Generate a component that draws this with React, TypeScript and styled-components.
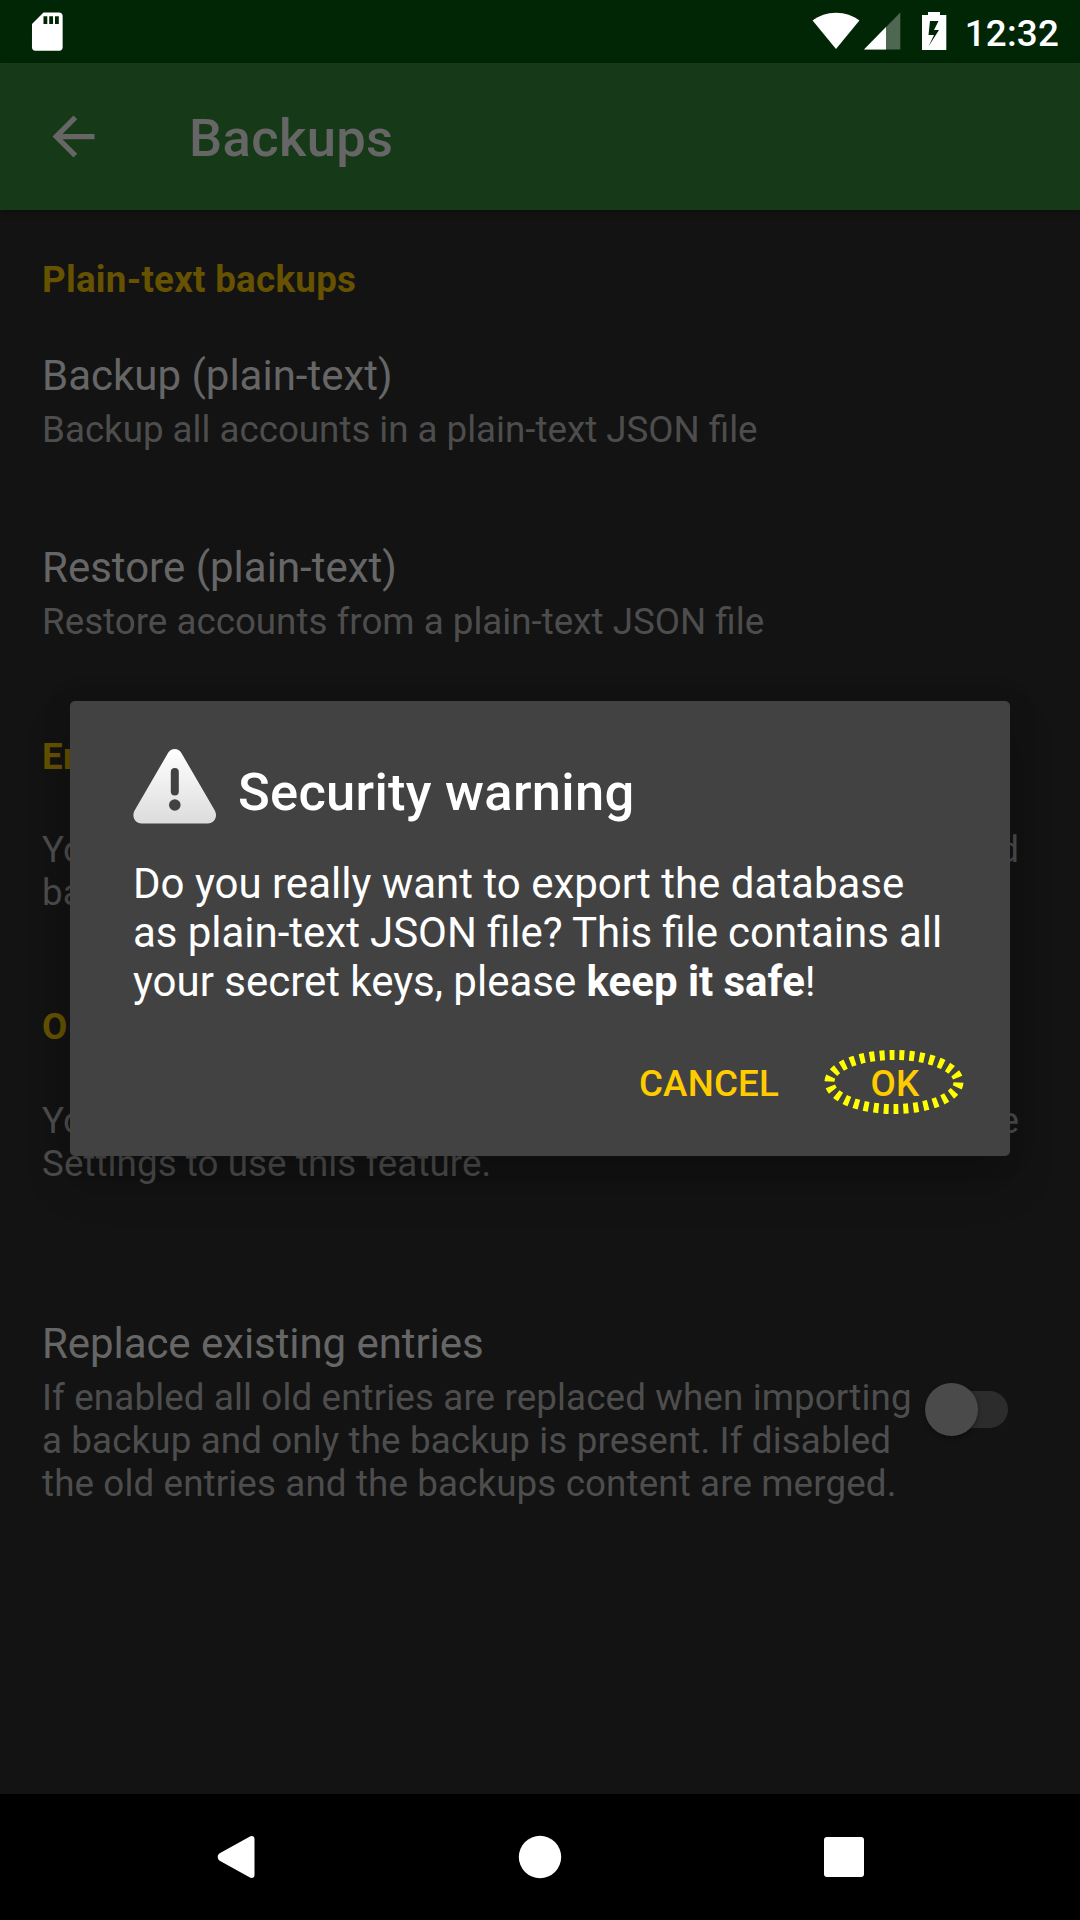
import React from "react";
import styled, { createGlobalStyle } from "styled-components";

const GlobalStyle = createGlobalStyle`
  *, *::before, *::after { box-sizing: border-box; }
  html, body { margin: 0; padding: 0; background: #131313; }
  body { font-family: Roboto, "Noto Sans", sans-serif; overflow: hidden; }
`;

const Screen = styled.div`
  position: relative;
  display: flex;
  flex-direction: column;
  width: 1080px;
  height: 1920px;
  background: #131313;
  overflow: hidden;
`;

const StatusBar = styled.header`
  flex: none;
  display: flex;
  justify-content: space-between;
  height: 63px;
  padding: 0 21px 0 24px;
  background: #002606;
  color: #fff;
`;

const StatusGroup = styled.div`
  display: flex;
  align-items: center;
`;

const StatusIcon = styled.svg<{ $w: number; $gap?: number }>`
  display: block;
  width: ${(p) => p.$w}px;
  height: 63px;
  margin-right: ${(p) => p.$gap ?? 0}px;
  fill: #fff;
`;

const Clock = styled.span`
  font-size: 36.75px;
  font-weight: 500;
  line-height: 43px;
  padding-top: 3px;
  letter-spacing: 0.2px;
`;

const AppBar = styled.div`
  flex: none;
  display: flex;
  align-items: center;
  height: 147px;
  padding-left: 42px;
  background: #163918;
  box-shadow: 0 2px 8px rgba(0, 0, 0, 0.35);
`;

const BackIcon = styled.svg`
  width: 63px;
  height: 63px;
  fill: #666;
`;

const AppTitle = styled.h1`
  margin: 3px 0 0 84px;
  font-size: 52.5px;
  line-height: 62px;
  font-weight: 500;
  letter-spacing: 0.35px;
  color: #666;
`;

const Content = styled.main`
  flex: 1;
  display: flex;
  flex-direction: column;
  padding: 48px 42px 0;
`;

const Category = styled.h2<{ $before?: number; $spacing?: number }>`
  margin: ${(p) => p.$before ?? 0}px 0 0;
  font-size: 36.75px;
  line-height: 43px;
  font-weight: 700;
  letter-spacing: ${(p) => p.$spacing ?? 0.25}px;
  color: #665200;
`;

const Preference = styled.section<{ $before: number }>`
  display: flex;
  align-items: center;
  justify-content: space-between;
  margin-top: ${(p) => p.$before}px;
`;

const PreferenceTitle = styled.h3<{ $spacing?: number }>`
  margin: 0;
  font-size: 42px;
  line-height: 49px;
  font-weight: 400;
  letter-spacing: ${(p) => p.$spacing ?? 0}px;
  color: #666;
`;

const Summary = styled.p<{ $spacing?: number; $word?: number }>`
  margin: 8px 0 0;
  font-size: 36.75px;
  line-height: 43px;
  letter-spacing: ${(p) => p.$spacing ?? 0}px;
  word-spacing: ${(p) => p.$word ?? 0}px;
  color: #4d4d4d;
  white-space: nowrap;
`;

const Info = styled.p<{ $before?: number }>`
  width: 977px;
  margin: ${(p) => p.$before ?? 50}px 0 0;
  font-size: 36.75px;
  line-height: 43px;
  letter-spacing: 0.06px;
  color: #4d4d4d;
`;

const FullLine = styled.span`
  display: block;
  white-space: nowrap;
  text-align: justify;
  text-align-last: justify;
`;

const SwitchTrack = styled.div`
  display: flex;
  align-items: center;
  width: 76px;
  height: 37px;
  margin: 0 30px 5px 0;
  border-radius: 19px;
  background: #2c2c2c;
`;

const SwitchThumb = styled.div`
  flex: none;
  width: 53px;
  height: 53px;
  margin-left: -7px;
  border-radius: 50%;
  background: #4a4a4a;
  box-shadow: 0 2px 4px rgba(0, 0, 0, 0.35);
`;

const DialogLayer = styled.div`
  position: absolute;
  inset: 0;
  display: flex;
  justify-content: center;
  align-items: flex-start;
  padding-top: 701px;
`;

const Dialog = styled.div`
  display: flex;
  flex-direction: column;
  width: 940px;
  height: 455px;
  padding: 47px 63px 0;
  border-radius: 5px;
  background: #424242;
  color: #fff;
  box-shadow: 0 26px 44px rgba(0, 0, 0, 0.22), 0 0 30px rgba(0, 0, 0, 0.1);
`;

const DialogHeader = styled.div`
  display: flex;
  align-items: center;
  height: 84px;
`;

const WarningIcon = styled.svg`
  width: 84px;
  height: 84px;
`;

const DialogTitle = styled.h2`
  margin: 3px 0 0 21px;
  font-size: 52.5px;
  line-height: 62px;
  font-weight: 500;
  letter-spacing: 0.27px;
`;

const Message = styled.p`
  margin: 27px 0 0;
  font-size: 42px;
  line-height: 49px;
  white-space: nowrap;
`;

const MessageLine = styled.span<{ $word?: number }>`
  display: block;
  word-spacing: ${(p) => p.$word ?? 0}px;
`;

const Actions = styled.div`
  display: flex;
  justify-content: flex-end;
  align-items: center;
  gap: 44px;
  margin: 46px -19px 0 0;
`;

const Action = styled.button<{ $w: number }>`
  position: relative;
  width: ${(p) => p.$w}px;
  height: 63px;
  padding: 0;
  border: 0;
  background: none;
  font: 500 36.75px/43px Roboto, "Noto Sans", sans-serif;
  letter-spacing: 0.2px;
  color: #ffcc00;
`;

const Ring = styled.svg`
  position: absolute;
  left: -5px;
  top: -8px;
  width: 150px;
  height: 76px;
`;

const NavBar = styled.nav`
  flex: none;
  display: flex;
  justify-content: center;
  align-items: center;
  height: 126px;
  background: #000;
`;

const NavIcon = styled.svg`
  width: 304px;
  height: 126px;
  fill: #fff;
`;

export default function App() {
  return (
    <>
      <GlobalStyle />
      <Screen>
        <StatusBar>
          <StatusGroup>
            <StatusIcon $w={46} viewBox="0 0 46 63">
              <path
                transform="translate(0.3 8.7) scale(1.917)"
                d="M18 2h-8L4.02 8 4 20.3c0 1 .7 1.7 1.7 1.7h12.6c1 0 1.7-.7 1.7-1.7V3.7C20 2.700 19.300 2 18 2zm-6 6h-2V4h2v4zm3 0h-2V4h2v4zm3 0h-2V4h2v4z"
              />
            </StatusIcon>
          </StatusGroup>
          <StatusGroup>
            <StatusIcon $w={48} $gap={4} viewBox="812 0 48 63">
              <path d="M836 49 812.600 20.500C819 15.500 827 12.700 836 12.700S853 15.500 859.400 20.500Z" />
            </StatusIcon>
            <StatusIcon $w={37} $gap={21} viewBox="864 0 37 63">
              <path d="M900.300 12.500V49.400H864Z" fillOpacity="0.3" />
              <path d="M886 27V49.400H864Z" />
            </StatusIcon>
            <StatusIcon $w={25} $gap={18} viewBox="922 0 25 63">
              <path
                fillRule="evenodd"
                d="M928 12h12v3h6.300v35H922V15h6zM930 21l-1.500 14h5.500l-5.500 11.500 10.500-16.500h-5l4.500-9z"
              />
            </StatusIcon>
            <Clock>12:32</Clock>
          </StatusGroup>
        </StatusBar>

        <AppBar>
          <BackIcon viewBox="0 0 24 24">
            <path d="M20 11H7.830l5.590-5.590L12 4l-8 8 8 8 1.410-1.410L7.830 13H20v-2z" />
          </BackIcon>
          <AppTitle>Backups</AppTitle>
        </AppBar>

        <Content>
          <Category>Plain-text backups</Category>
          <Preference $before={50}>
            <div>
              <PreferenceTitle>Backup (plain-text)</PreferenceTitle>
              <Summary $word={-0.15}>Backup all accounts in a plain-text JSON file</Summary>
            </div>
          </Preference>
          <Preference $before={92}>
            <div>
              <PreferenceTitle>Restore (plain-text)</PreferenceTitle>
              <Summary>Restore accounts from a plain-text JSON file</Summary>
            </div>
          </Preference>

          <Category $before={92}>Encrypted backups</Category>
          <Info>
            <FullLine>You have to set a password to create an encrypted</FullLine>
            backup of your accounts.
          </Info>

          <Category $before={91} $spacing={1.5}>OpenPGP backups</Category>
          <Info $before={51}>
            <FullLine>You have to select an OpenPGP provider in the</FullLine>
            Settings to use this feature.
          </Info>

          <Preference $before={134}>
            <div>
              <PreferenceTitle $spacing={-0.07}>Replace existing entries</PreferenceTitle>
              <Summary $spacing={0.12}>
                If enabled all old entries are replaced when importing
                <br />
                a backup and only the backup is present. If disabled
                <br />
                the old entries and the backups content are merged.
              </Summary>
            </div>
            <SwitchTrack>
              <SwitchThumb />
            </SwitchTrack>
          </Preference>
        </Content>

        <NavBar>
          <NavIcon viewBox="84 1794 304 126">
            <path d="M217.700 1857c0-1.500.7-2.800 2-3.700L249.500 1836.700c2.500-1.500 5-.4 5 2.300v36c0 2.700-2.500 3.800-5 2.300L219.700 1860.700c-1.300-.9-2-2.200-2-3.700z" />
          </NavIcon>
          <NavIcon viewBox="388 1794 304 126">
            <circle cx="540" cy="1857" r="21.200" />
          </NavIcon>
          <NavIcon viewBox="692 1794 304 126">
            <rect x="824" y="1837" width="40" height="40" rx="3" />
          </NavIcon>
        </NavBar>

        <DialogLayer>
          <Dialog role="alertdialog">
            <DialogHeader>
              <WarningIcon viewBox="133 748 84 84">
                <defs>
                  <linearGradient id="warningFill" x1="0" y1="0" x2="0" y2="1">
                    <stop offset="0" stopColor="#ffffff" />
                    <stop offset="1" stopColor="#dcdcdc" />
                  </linearGradient>
                </defs>
                <path
                  fill="url(#warningFill)"
                  d="M168 753c3-5.300 10.400-5.300 13.400 0L214.800 810.500c3.300 6-.5 13-7 13H141.600c-6.500 0-10.300-7-7-13z"
                />
                <rect x="170.800" y="768" width="8" height="27.500" rx="4" fill="#424242" />
                <circle cx="174.800" cy="805" r="5.800" fill="#424242" />
              </WarningIcon>
              <DialogTitle>Security warning</DialogTitle>
            </DialogHeader>
            <Message>
              <MessageLine>Do you really want to export the database</MessageLine>
              <MessageLine $word={-0.3}>as plain-text JSON file? This file contains all</MessageLine>
              <MessageLine $word={-0.1}>
                your secret keys, please <b>keep it safe</b>!
              </MessageLine>
            </Message>
            <Actions>
              <Action $w={142}>CANCEL</Action>
              <Action $w={142}>
                OK
                <Ring viewBox="0 0 150 76">
                  <ellipse
                    cx="75"
                    cy="38"
                    rx="64.500"
                    ry="27"
                    pathLength={300}
                    fill="none"
                    stroke="#ffff00"
                    strokeWidth="10"
                    strokeDasharray="5 5"
                    strokeDashoffset="-0.500"
                  />
                </Ring>
              </Action>
            </Actions>
          </Dialog>
        </DialogLayer>
      </Screen>
    </>
  );
}
